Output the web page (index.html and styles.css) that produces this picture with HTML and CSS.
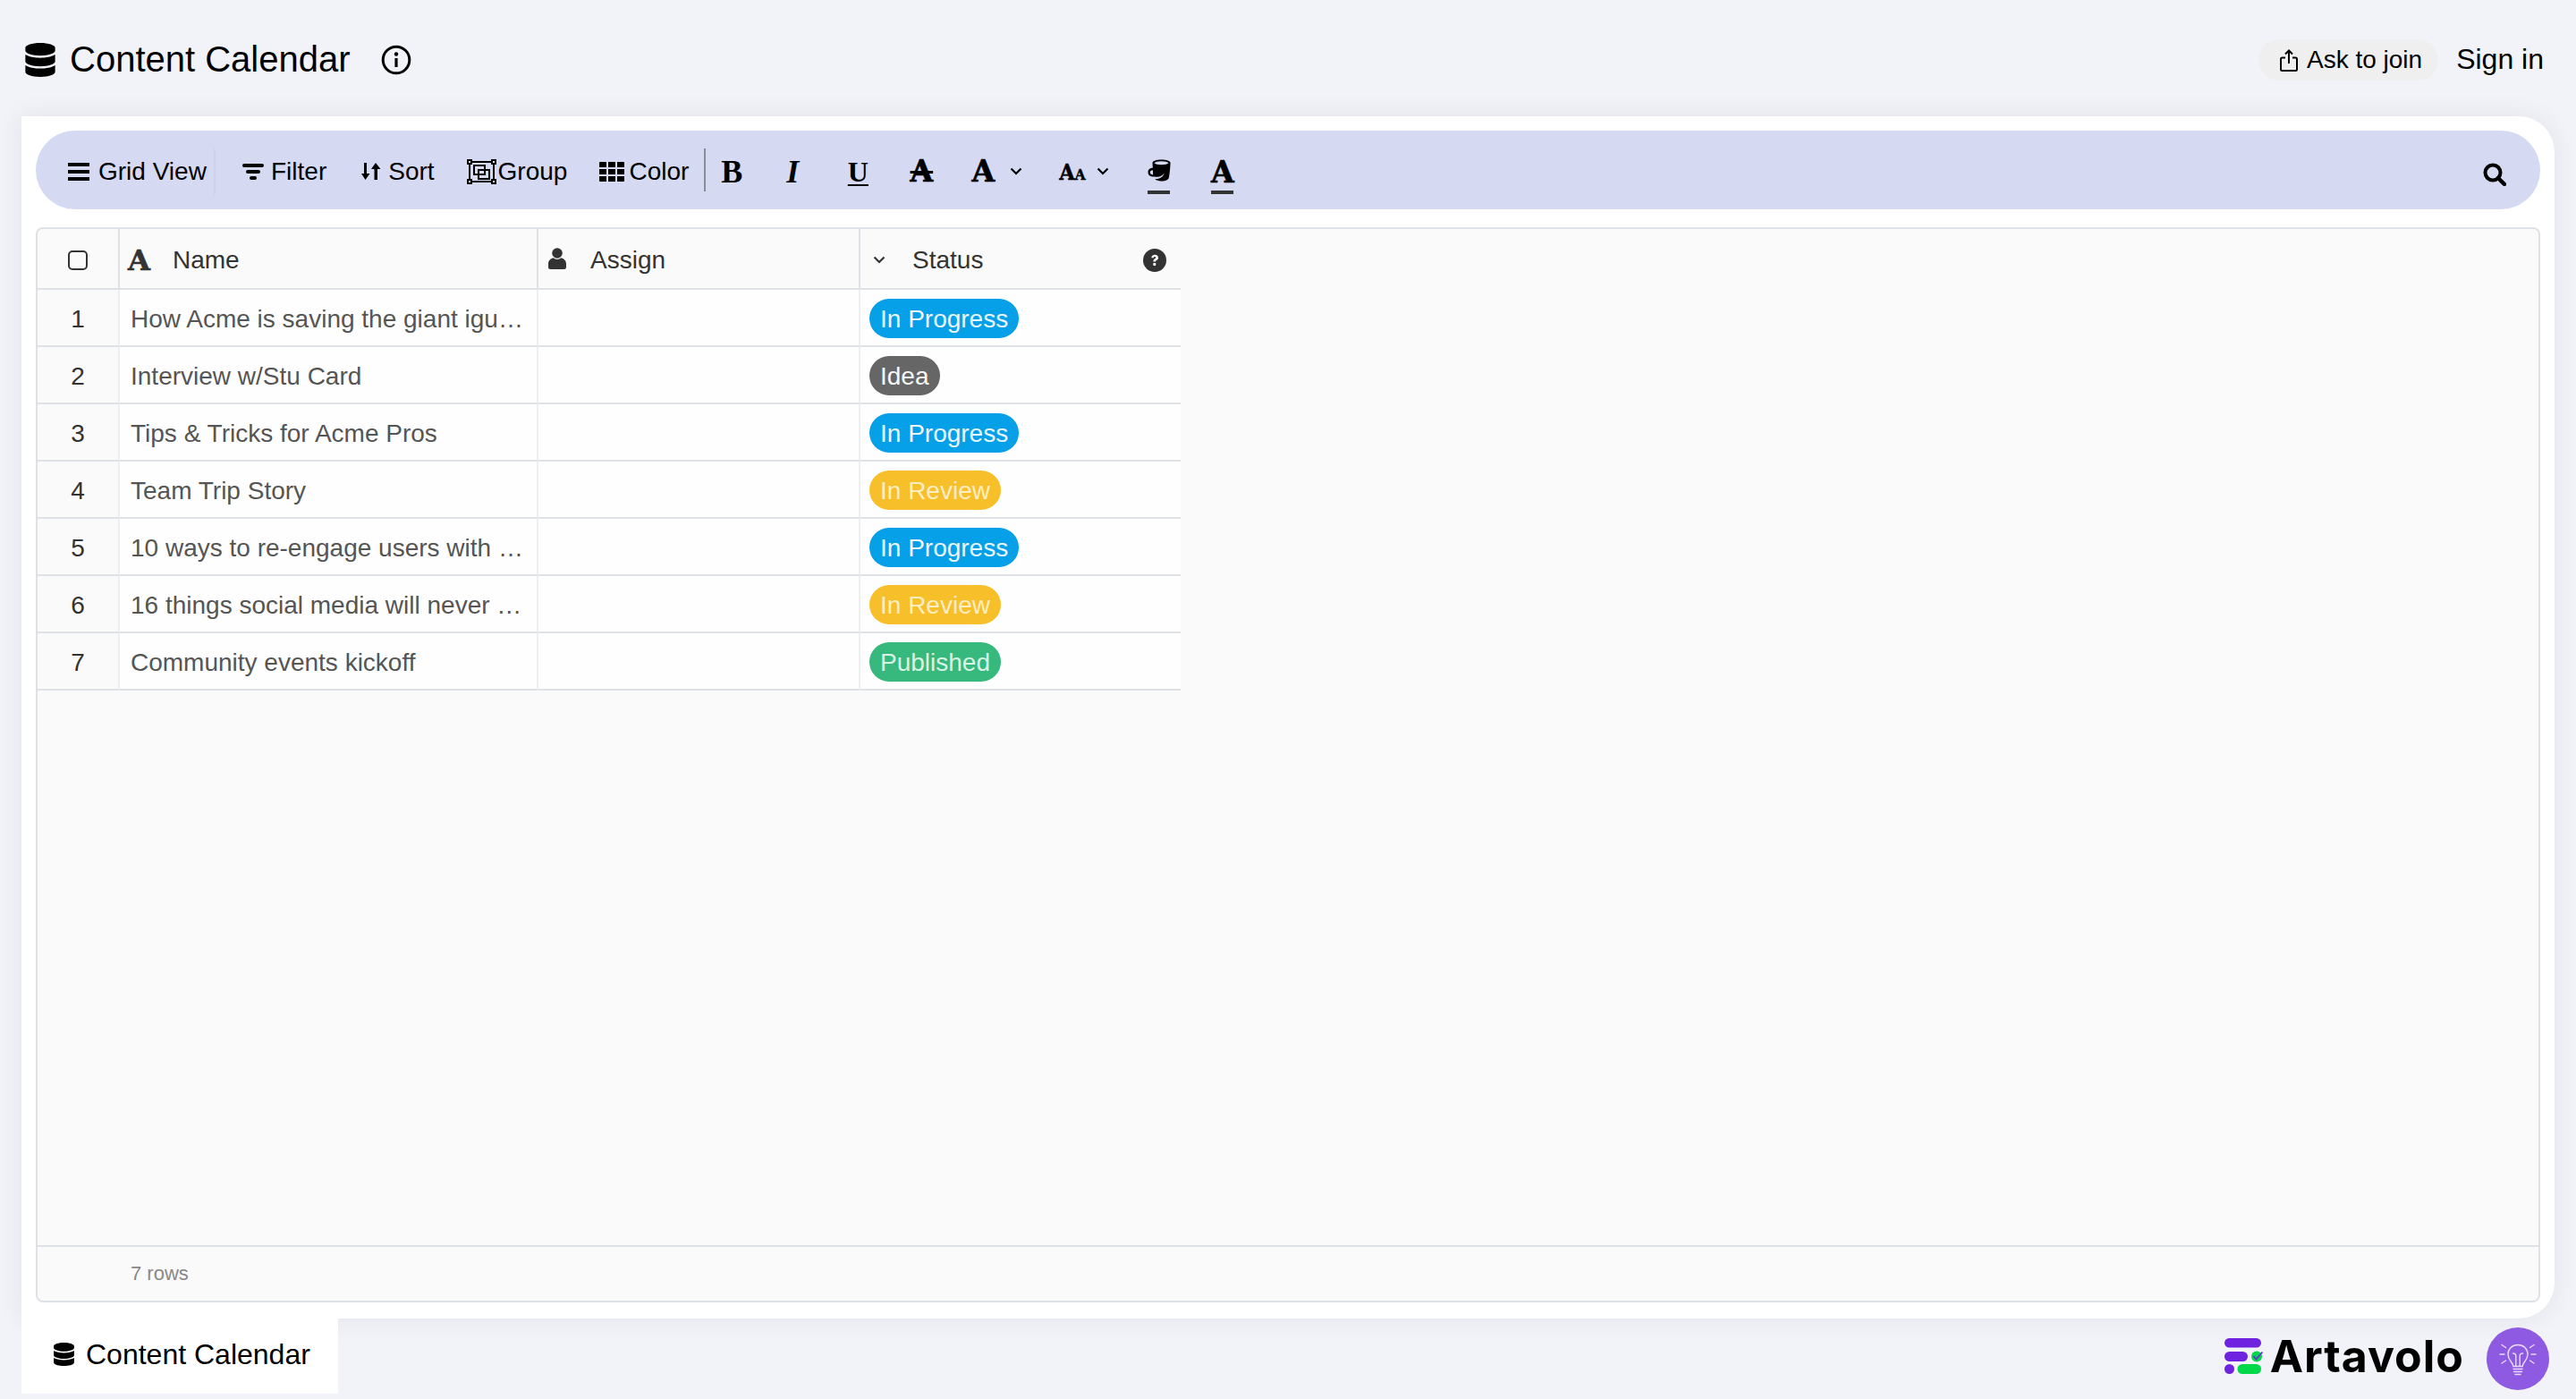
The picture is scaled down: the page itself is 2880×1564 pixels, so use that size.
FILE: index.html
```html
<!DOCTYPE html>
<html lang="en">
<head>
    <meta charset="UTF-8">
    <meta name="viewport" content="width=device-width, initial-scale=1.0">
    <title>Content Calendar</title>
    <link rel="stylesheet" href="styles.css">
</head>
<body>
    <svg class="defs" width="0" height="0">
        <symbol id="database" viewBox="0 0 448 512">
            <path d="M448 73.143v45.714C448 159.143 347.667 192 224 192S0 159.143 0 118.857V73.143C0 32.857 100.333 0 224 0s224 32.857 224 73.143zM448 176v102.857C448 319.143 347.667 352 224 352S0 319.143 0 278.857V176c48.125 33.143 136.208 48.572 224 48.572S399.874 209.143 448 176zm0 160v102.857C448 479.143 347.667 512 224 512S0 479.143 0 438.857V336c48.125 33.143 136.208 48.572 224 48.572S399.874 369.143 448 336z"/>
        </symbol>
        <symbol id="chevron" viewBox="0 0 14 9">
            <path d="M1.5 1.5 7 7l5.5-5.5" fill="none" stroke="currentColor" stroke-width="2.2"/>
        </symbol>
    </svg>

    <header class="topbar">
        <svg class="title-icon"><use href="#database"/></svg>
        <h1 class="title">Content Calendar</h1>
        <svg class="info-icon" viewBox="0 0 34 34">
            <circle cx="17" cy="17" r="14.8" fill="none" stroke="#000" stroke-width="3"/>
            <circle cx="17" cy="10.5" r="2.2"/>
            <path d="M15.4 15h3.2v10h-3.2z"/>
        </svg>
        <div class="topbar-right">
            <button class="join">
                <svg class="join-icon" viewBox="0 0 20 25">
                    <path d="M6 9.5H2.5a1.5 1.5 0 0 0-1.5 1.5v11.5A1.5 1.5 0 0 0 2.500 24h15a1.500 1.500 0 0 0 1.500-1.500V11a1.500 1.500 0 0 0-1.500-1.500H14M10 16V2M6 5.500 10 1.500l4 4" fill="none" stroke="#000" stroke-width="2"/>
                </svg>
                Ask to join
            </button>
            <a class="signin">Sign in</a>
        </div>
    </header>

    <main class="card">
        <div class="toolbar">
            <div class="tool tool-view">
                <svg class="ic-bars" viewBox="0 0 24 20"><path d="M0 0h24v4H0zM0 8h24v4H0zM0 16h24v4H0z"/></svg>
                Grid View
            </div>
            <div class="tool tool-filter">
                <svg class="ic-filter" viewBox="0 0 24 18"><rect width="24" height="4" rx="2"/><rect x="4" y="7" width="16" height="4" rx="2"/><rect x="8" y="14" width="8" height="4" rx="2"/></svg>
                Filter
            </div>
            <div class="tool tool-sort">
                <svg class="ic-sort" viewBox="0 0 22 19"><path d="M3 0h3v12h3.500L4.500 19 0 12h3zM16 0l5.500 7H18v12h-3.500V7H11z"/></svg>
                Sort
            </div>
            <div class="tool tool-group">
                <svg class="ic-group" viewBox="0 0 33 28">
                    <path d="M3 3h27v22H3z" fill="none" stroke="#000" stroke-width="2"/>
                    <path d="M8 7h12v10H8zM13 12h12v10H13z" fill="none" stroke="#000" stroke-width="2"/>
                    <path d="M0 0h6v6H0zM27 0h6v6h-6zM0 22h6v6H0zM27 22h6v6h-6z" fill="#d5d9f2"/>
                    <path d="M1 1h4v4H1zM28 1h4v4h-4zM1 23h4v4H1zM28 23h4v4h-4z" fill="none" stroke="#000" stroke-width="2"/>
                </svg>
                Group
            </div>
            <div class="tool tool-color">
                <svg class="ic-th" viewBox="0 0 28 22"><path d="M0 1a1 1 0 0 1 1-1h6a1 1 0 0 1 1 1v5H0zM10 0h8v6h-8zM20 0h7a1 1 0 0 1 1 1v5h-8zM0 8h8v6H0zM10 8h8v6h-8zM20 8h8v6h-8zM0 16h8v6H1a1 1 0 0 1-1-1zM10 16h8v6h-8zM20 16h8v5a1 1 0 0 1-1 1h-7z"/></svg>
                Color
            </div>
            <div class="tool-divider"></div>
            <div class="fmt fmt-b">B</div>
            <div class="fmt fmt-i">I</div>
            <div class="fmt fmt-u">U</div>
            <div class="fmt fmt-a fmt-s">A</div>
            <div class="fmt fmt-a fmt-f">A</div>
            <svg class="ic-chev chev-font"><use href="#chevron"/></svg>
            <div class="fmt-size"><span class="big">A</span><span class="small">A</span></div>
            <svg class="ic-chev chev-size"><use href="#chevron"/></svg>
            <div class="fmt-line fmt-mug">
                <svg class="ic-mug" viewBox="0 0 26 25">
                    <path d="M5.500 4C5.500 1.800 10 .5 15.500 .5S25.500 1.800 25.500 4c0 3-.8 14-1.800 17-.7 2-4 3.500-8.200 3.500-3.500 0-6-1-7.200-2.500 5 .5 9-2 10.500-6.500-2.500 3-5 4-7.500 4.200-1 0-2.300 0-3.800-.2C2.500 19.500 .5 17.500 .5 14.500c0-2.800 2-4.800 5.300-4.800zm2 .2c1 1.200 4 2 8 2s7-.8 8-2c-1-1.200-4-2-8-2s-7 .8-8 2zM5.900 12.200c-2 0-3.100 1-3.100 2.400 0 1.500 1 2.600 3.300 2.800z" fill-rule="evenodd"/>
                </svg>
            </div>
            <div class="fmt-line fmt-color">A</div>
            <svg class="ic-search" viewBox="0 0 26 26">
                <circle cx="11" cy="11" r="8.500" fill="none" stroke="#000" stroke-width="4"/>
                <path d="m17 17 7 7" stroke="#000" stroke-width="4.500" stroke-linecap="round"/>
            </svg>
        </div>

        <section class="table-box">
            <div class="grid">
                <div class="head head-check"><span class="checkbox"></span></div>
                <div class="head"><span class="head-a">A</span><span class="head-label">Name</span></div>
                <div class="head">
                    <svg class="ic-user" viewBox="0 0 20 24"><circle cx="10" cy="6" r="5.800"/><path d="M5.500 11.200a7.500 7.500 0 0 0 9 0C17.500 12 20 14.500 20 18v3.500a2.500 2.500 0 0 1-2.500 2.500h-15A2.500 2.500 0 0 1 0 21.500V18c0-3.500 2.500-6 5.500-6.800z"/></svg>
                    <span class="head-label">Assign</span>
                </div>
                <div class="head">
                    <svg class="ic-chev-head"><use href="#chevron"/></svg>
                    <span class="head-label">Status</span>
                    <svg class="ic-help" viewBox="0 0 26 26">
                        <circle cx="13" cy="13" r="13" fill="#333"/>
                        <path d="M9.300 10.300c0-2.200 1.700-3.500 3.900-3.500 2.100 0 3.800 1.300 3.800 3.200 0 1.800-1 2.500-2 3.100-.7.400-.9.700-.9 1.400h-2.700c0-1.800.6-2.500 1.700-3.200.7-.4 1.100-.8 1.100-1.400 0-.6-.5-1-1.100-1-.7 0-1.200.5-1.200 1.400z" fill="#fff"/>
                        <rect x="11.300" y="16" width="2.900" height="2.900" rx=".6" fill="#fff"/>
                    </svg>
                </div>

                <div class="num">1</div>
                <div class="cell name"><span class="clip">How Acme is saving the giant iguana from extinction</span></div>
                <div class="cell"></div>
                <div class="cell status"><span class="pill progress">In Progress</span></div>

                <div class="num">2</div>
                <div class="cell name"><span class="clip">Interview w/Stu Card</span></div>
                <div class="cell"></div>
                <div class="cell status"><span class="pill idea">Idea</span></div>

                <div class="num">3</div>
                <div class="cell name"><span class="clip">Tips &amp; Tricks for Acme Pros</span></div>
                <div class="cell"></div>
                <div class="cell status"><span class="pill progress">In Progress</span></div>

                <div class="num">4</div>
                <div class="cell name"><span class="clip">Team Trip Story</span></div>
                <div class="cell"></div>
                <div class="cell status"><span class="pill review">In Review</span></div>

                <div class="num">5</div>
                <div class="cell name"><span class="clip">10 ways to re-engage users with email newsletters</span></div>
                <div class="cell"></div>
                <div class="cell status"><span class="pill progress">In Progress</span></div>

                <div class="num">6</div>
                <div class="cell name"><span class="clip">16 things social media will never tell you</span></div>
                <div class="cell"></div>
                <div class="cell status"><span class="pill review">In Review</span></div>

                <div class="num">7</div>
                <div class="cell name"><span class="clip">Community events kickoff</span></div>
                <div class="cell"></div>
                <div class="cell status"><span class="pill published">Published</span></div>
            </div>
            <div class="table-space"></div>
            <div class="table-foot">7 rows</div>
        </section>
    </main>

    <footer class="bottom">
        <div class="tab">
            <svg class="tab-icon"><use href="#database"/></svg>
            Content Calendar
        </div>
        <div class="brand">
            <svg class="brand-mark" viewBox="0 0 44 40">
                <rect width="41" height="10.500" rx="5.200" fill="#6f23e0"/>
                <rect y="15" width="26" height="11" rx="5.500" fill="#6f23e0"/>
                <circle cx="5.500" cy="34.500" r="5.500" fill="#6f23e0"/>
                <rect x="14.500" y="29" width="26.500" height="11" rx="5.500" fill="#00d84a"/>
                <circle cx="36" cy="20.500" r="6" fill="#00d84a"/>
                <path d="m32.500 20 3 3.500 7-8" fill="none" stroke="#6f23e0" stroke-width="1.800"/>
            </svg>
            <span class="brand-name">Artavolo</span>
        </div>
        <div class="help-bulb">
            <svg class="ic-bulb" viewBox="0 0 44 44" fill="none" stroke="#e9dcfb" stroke-width="1.400" stroke-linecap="round">
                <path d="M22 6.500c-6.500 0-11 4.800-11 10.500 0 3.500 1.500 6 3.300 8.200 1.400 1.700 2.200 3.300 2.500 5.300h10.400c.3-2 1.100-3.600 2.500-5.300C31.500 23 33 20.500 33 17c0-5.700-4.500-10.500-11-10.500z"/>
                <path d="M19.800 30V19c0-2-1.500-3-3.300-3M24.200 30V19c0-2 1.500-3 3.300-3M17 33.500h10M17.500 36.500h9M19 39.500h6"/>
                <path d="M4 6.500 8.500 9.500M2 17h5M4 27l4.500-3M40 6.500l-4.500 3M42 17h-5M40 27l-4.500-3"/>
            </svg>
        </div>
    </footer>
</body>
</html>
```

FILE: styles.css
```css
* {
    box-sizing: border-box;
}
body {
    display: flex;
    flex-direction: column;
    height: 100vh;
    margin: 0;
    overflow: hidden;
    background-color: #f2f3f8;
    color: #000;
    font-family: "Liberation Sans", Arial, sans-serif;
    font-size: 28px;
}
.defs {
    position: absolute;
}

/* top bar */
.topbar {
    display: flex;
    align-items: center;
    flex: 0 0 130px;
    padding: 0 36px 0 28px;
}
.title-icon {
    width: 34px;
    height: 38px;
    margin-top: 3px;
}
.title {
    margin: 3px 0 0 16px;
    font-size: 40px;
    font-weight: 400;
}
.info-icon {
    width: 34px;
    height: 34px;
    margin-left: 34px;
    margin-top: 4px;
}
.topbar-right {
    display: flex;
    align-items: center;
    margin-left: auto;
}
.join {
    display: flex;
    align-items: center;
    gap: 10px;
    height: 46px;
    padding: 0 18px 0 24px;
    border: none;
    border-radius: 23px;
    background-color: #efefef;
    color: #000;
    font-family: inherit;
    font-size: 28px;
    margin-top: 4px;
}
.join-icon {
    width: 20px;
    height: 25px;
}
.signin {
    margin: 3px 0 0 20px;
    font-size: 32px;
}

/* card */
.card {
    display: flex;
    flex-direction: column;
    flex: 0 0 1344px;
    margin: 0 24px;
    padding: 16px;
    background-color: #fff;
    border-radius: 0 40px 40px 0;
    box-shadow: 0 0 28px rgba(60, 70, 110, 0.09);
}
.toolbar {
    display: flex;
    align-items: center;
    flex: 0 0 88px;
    padding: 3px 0 0 36px;
    background-color: #d5d9f2;
    border-radius: 44px;
}
.tool {
    display: flex;
    align-items: center;
    height: 60px;
}
.tool-view {
    gap: 10px;
    width: 165px;
    border-right: 2px solid #d0d4ea;
    border-radius: 0 6px 6px 0;
}
.tool-filter {
    gap: 8px;
    margin-left: 30px;
}
.tool-sort {
    gap: 8px;
    margin-left: 39px;
}
.tool-group {
    gap: 2px;
    margin-left: 36px;
}
.tool-color {
    gap: 5px;
    margin-left: 36px;
}
.ic-bars {
    width: 24px;
    height: 20px;
}
.ic-filter {
    width: 24px;
    height: 18px;
}
.ic-sort {
    width: 22px;
    height: 19px;
}
.ic-group {
    width: 33px;
    height: 28px;
}
.ic-th {
    width: 28px;
    height: 22px;
}
.tool-divider {
    width: 2px;
    height: 48px;
    margin: -3px 0 0 17px;
    background-color: #8a8c99;
}
.fmt {
    width: 56px;
    margin-left: 15px;
    text-align: center;
    line-height: 1;
}
.fmt-b {
    margin-left: 1px;
    font-family: "Liberation Serif", serif;
    font-weight: 700;
    font-size: 36px;
}
.fmt-i {
    margin-left: 12px;
    font-family: "Liberation Serif", serif;
    font-weight: 700;
    font-style: italic;
    font-size: 36px;
}
.fmt-u {
    margin-left: 17px;
    font-family: "Liberation Serif", serif;
    font-weight: 700;
    font-size: 32px;
    text-decoration: underline;
    text-decoration-thickness: 2px;
    text-underline-offset: 3px;
}
.fmt-a {
    font-family: "DejaVu Serif", serif;
    font-weight: 700;
    font-size: 33px;
    -webkit-text-stroke: 0.7px #000;
}
.fmt-s {
    text-decoration: line-through;
}
.fmt-f {
    margin-left: 13px;
}
.ic-chev {
    width: 14px;
    height: 9px;
    color: #000;
}
.chev-font {
    margin-left: 2px;
}
.fmt-size {
    width: 30px;
    margin-left: 41px;
    font-family: "DejaVu Serif Condensed", "DejaVu Serif", serif;
    font-weight: 700;
    line-height: 1;
    -webkit-text-stroke: 0.5px #000;
}
.fmt-size .big {
    font-size: 25px;
}
.fmt-size .small {
    font-size: 17px;
}
.chev-size {
    margin-left: 12px;
}
.fmt-line {
    display: flex;
    justify-content: center;
    align-items: flex-end;
    width: 25px;
    height: 50px;
    border-bottom: 4px solid #333;
    font-family: "DejaVu Serif", serif;
    font-weight: 700;
    font-size: 33px;
    line-height: 1;
    -webkit-text-stroke: 0.7px #000;
}
.fmt-mug {
    margin-left: 43px;
    padding-bottom: 10px;
}
.fmt-color {
    margin-left: 46px;
    padding-bottom: 4px;
}
.ic-mug {
    flex: none;
    width: 26px;
    height: 25px;
}
.ic-search {
    width: 26px;
    height: 26px;
    margin: 7px 38px 0 auto;
}

/* table */
.table-box {
    display: flex;
    flex-direction: column;
    flex: 1;
    margin-top: 20px;
    margin-bottom: 2px;
    background-color: #fafafa;
    border: 2px solid #dee2e6;
    border-radius: 8px;
}
.grid {
    display: grid;
    grid-template-columns: 92px 468px 360px 358px;
    grid-auto-rows: 64px;
    grid-template-rows: 68px;
}
.head {
    display: flex;
    align-items: center;
    padding: 3px 0 0 12px;
    border-right: 2px solid #dee2e6;
    border-bottom: 2px solid #dee2e6;
    color: #333;
}
.head:nth-child(4) {
    border-right: none;
}
.head-check {
    justify-content: center;
    padding-left: 0;
}
.checkbox {
    width: 22px;
    height: 22px;
    border: 2px solid #333;
    border-radius: 5px;
}
.head-a {
    width: 25px;
    font-family: "DejaVu Serif", serif;
    font-weight: 700;
    font-size: 32px;
    line-height: 1;
    margin-left: -3px;
    -webkit-text-stroke: 0.7px #333;
}
.head-label {
    margin-left: 25px;
}
.ic-user {
    flex: none;
    width: 20px;
    height: 24px;
    margin-top: -3px;
    margin-left: -1px;
    fill: #333;
}
.ic-user + .head-label {
    margin-left: 27px;
}
.ic-chev-head {
    width: 14px;
    height: 9px;
    color: #333;
    margin-left: 2px;
}
.ic-chev-head + .head-label {
    margin-left: 30px;
}
.ic-help {
    width: 26px;
    height: 26px;
    margin-left: auto;
    margin-right: 16px;
}
.num {
    display: flex;
    align-items: center;
    justify-content: center;
    padding-top: 3px;
    border-right: 2px solid #eeeff1;
    border-bottom: 2px solid #dee2e6;
    color: #333;
}
.cell {
    display: flex;
    align-items: center;
    min-width: 0;
    padding: 3px 12px 0;
    background-color: #fefefe;
    border-right: 2px solid #eeeff1;
    border-bottom: 2px solid #dee2e6;
}
.cell.status {
    padding: 2px 10px 0;
    border-right: none;
}
.name {
    color: #555;
}
.clip {
    overflow: hidden;
    white-space: nowrap;
    text-overflow: ellipsis;
}
.pill {
    display: inline-flex;
    align-items: center;
    height: 44px;
    padding: 2px 12px 0;
    border-radius: 22px;
    color: #fff;
}
.progress {
    background-color: #06a0e8;
    color: #eaf7ff;
}
.idea {
    background-color: #666;
    color: #f7f7f7;
}
.review {
    background-color: #f7bf29;
    color: #fdeec2;
}
.published {
    background-color: #37b87c;
    color: #d7f3e5;
}
.table-space {
    flex: 1;
}
.table-foot {
    display: flex;
    align-items: center;
    flex: 0 0 62px;
    padding-left: 104px;
    border-top: 2px solid #dee2e6;
    color: #888;
    font-size: 22px;
}

/* bottom */
.bottom {
    display: flex;
    align-items: flex-start;
    flex: 1;
}
.tab {
    display: flex;
    align-items: center;
    gap: 13px;
    width: 354px;
    height: 84px;
    margin-left: 24px;
    padding: 0 0 4px 36px;
    background-color: #fff;
    font-size: 32px;
}
.tab-icon {
    width: 23px;
    height: 26px;
}
.brand {
    display: flex;
    align-items: center;
    gap: 7px;
    margin-left: auto;
    margin-top: 22px;
}
.brand-mark {
    width: 44px;
    height: 40px;
}
.brand-name {
    font-family: Inter, sans-serif;
    font-weight: 700;
    font-size: 50px;
    line-height: 40px;
    letter-spacing: 1px;
}
.help-bulb {
    display: flex;
    align-items: center;
    justify-content: center;
    width: 70px;
    height: 70px;
    margin: 10px 30px 0 25px;
    border-radius: 50%;
    background-color: #8e5ae2;
}
.ic-bulb {
    width: 44px;
    height: 44px;
}
```
